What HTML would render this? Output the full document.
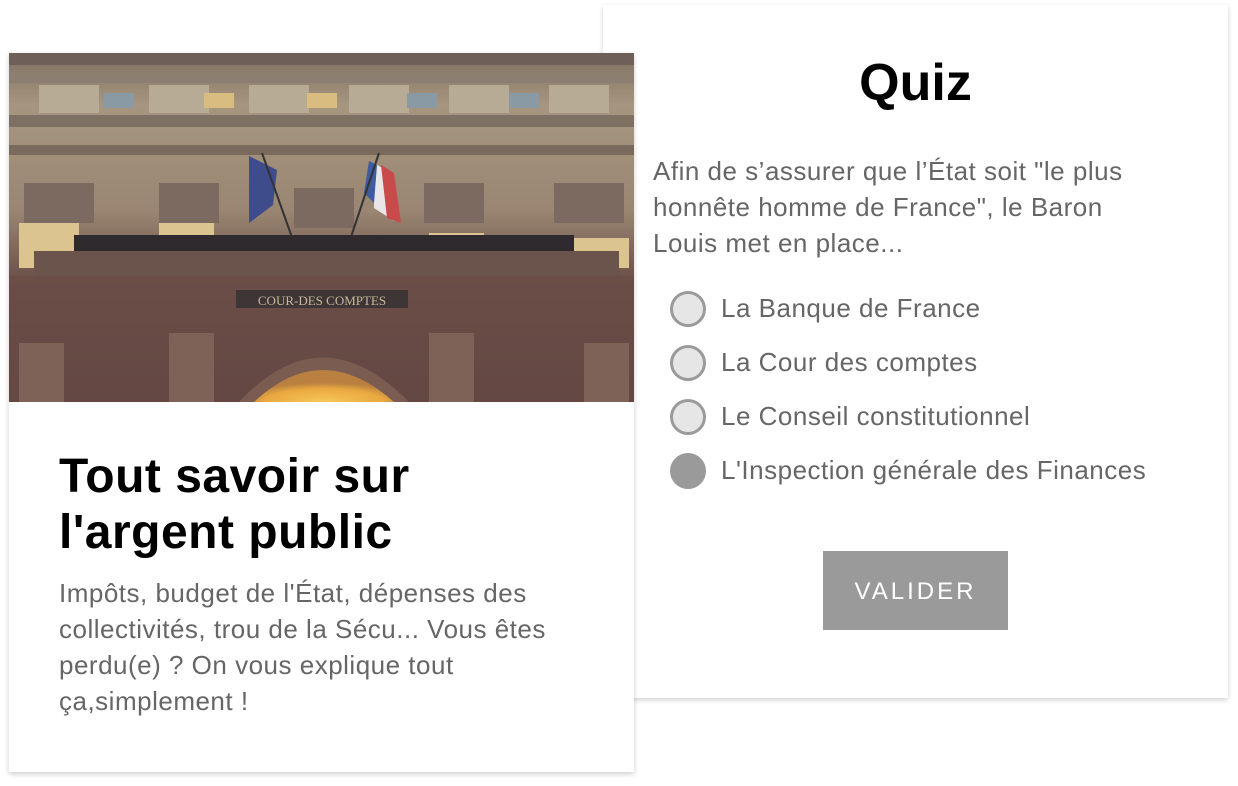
<!DOCTYPE html>
<html><head><meta charset="utf-8"><style>
html,body{margin:0;padding:0;background:#fff;width:1238px;height:786px;overflow:hidden;position:relative}
.quiz{position:absolute;left:603px;top:5px;width:625px;height:693px;background:#fff;box-shadow:0 2px 5px rgba(0,0,0,.18)}
.card{position:absolute;left:9px;top:53px;width:625px;height:719px;background:#fff;box-shadow:0 2px 5px rgba(0,0,0,.2)}
.sans{font-family:"Liberation Sans",sans-serif;color:#666;font-size:26px;letter-spacing:0.5px;line-height:36px;white-space:nowrap}
h1{position:absolute;margin:0;font-family:"Liberation Sans",sans-serif;font-weight:bold;color:#000}
.opt{position:absolute;left:67px;height:34px}
.opt .r{position:absolute;left:0;top:0;width:30px;height:30px;border-radius:50%;border:3px solid #9a9a9a;background:#e6e6e6}
.opt .r.f{background:#9a9a9a}
.opt span{position:absolute;left:51px;top:-1px}
.btn{position:absolute;left:220px;top:546px;width:185px;height:79px;background:#9a9a9a;color:#fff;font-family:"Liberation Sans",sans-serif;font-size:24px;letter-spacing:3px;text-align:center;line-height:81px}
</style></head><body>
<div class="quiz">
<h1 style="left:0;width:625px;text-align:center;top:48px;font-size:52px">Quiz</h1>
<div class="sans" style="position:absolute;left:50px;top:148px">Afin de s’assurer que l’État soit "le plus<br>honnête homme de France", le Baron<br>Louis met en place...</div>
<div class="opt" style="top:286px"><div class="r"></div><span class="sans">La Banque de France</span></div>
<div class="opt" style="top:340px"><div class="r"></div><span class="sans">La Cour des comptes</span></div>
<div class="opt" style="top:394px"><div class="r"></div><span class="sans">Le Conseil constitutionnel</span></div>
<div class="opt" style="top:448px"><div class="r f"></div><span class="sans">L'Inspection générale des Finances</span></div>
<div class="btn">VALIDER</div>
</div>
<div class="card">
<svg width="625" height="349" viewBox="0 0 625 349" style="position:absolute;left:0;top:0;display:block">
<defs>
<linearGradient id="g" x1="0" y1="0" x2="0" y2="1">
<stop offset="0" stop-color="#7e6e62"/><stop offset=".15" stop-color="#a6967f"/><stop offset=".45" stop-color="#9a8672"/><stop offset=".65" stop-color="#6b5048"/><stop offset="1" stop-color="#5a4040"/></linearGradient>
<radialGradient id="a" cx=".5" cy="1" r=".6"><stop offset="0" stop-color="#f7c75a"/><stop offset=".7" stop-color="#e9a840"/><stop offset="1" stop-color="#b98040"/></radialGradient>
</defs>
<rect width="625" height="349" fill="url(#g)"/>
<rect y="0" width="625" height="12" fill="#6e6058"/>
<rect y="22" width="625" height="8" fill="#8c7e70"/>
<g fill="#b8ab96"><rect x="30" y="32" width="60" height="28"/><rect x="140" y="32" width="60" height="28"/><rect x="240" y="32" width="60" height="28"/><rect x="340" y="32" width="60" height="28"/><rect x="440" y="32" width="60" height="28"/><rect x="540" y="32" width="60" height="28"/></g>
<g fill="#d8bc80"><rect x="195" y="40" width="30" height="15"/><rect x="298" y="40" width="30" height="15"/></g>
<g fill="#8a9aa4"><rect x="95" y="40" width="30" height="15"/><rect x="398" y="40" width="30" height="15"/><rect x="500" y="40" width="30" height="15"/></g>
<rect y="62" width="625" height="12" fill="#7e7062"/>
<rect y="92" width="625" height="10" fill="#7a6a5c"/>
<g fill="#7c6a60"><rect x="15" y="130" width="70" height="40"/><rect x="150" y="130" width="60" height="40"/><rect x="285" y="135" width="60" height="40"/><rect x="415" y="130" width="60" height="40"/><rect x="545" y="130" width="70" height="40"/></g>
<g fill="#dcc490"><rect x="10" y="170" width="60" height="45"/><rect x="150" y="170" width="55" height="30"/><rect x="420" y="180" width="55" height="20"/><rect x="560" y="185" width="60" height="30"/></g>
<polygon points="240,103 268,117 264,152 240,170" fill="#3e4c8c"/>
<line x1="253" y1="100" x2="285" y2="190" stroke="#333" stroke-width="2"/>
<polygon points="365,110 378,118 385,168 365,155" fill="#e8e6e8"/><polygon points="372,112 385,120 392,170 378,165" fill="#c84a4a"/><polygon points="360,108 368,112 365,150 355,140" fill="#3e5aa0"/>
<line x1="370" y1="100" x2="340" y2="190" stroke="#333" stroke-width="2"/>
<rect x="65" y="182" width="500" height="16" fill="#2e2a2e"/>
<rect x="25" y="198" width="585" height="25" fill="#6a544c"/>
<rect x="0" y="223" width="625" height="126" fill="#6a4c46" opacity=".6"/>
<rect x="227" y="237" width="172" height="18" fill="#3e3636"/>
<text x="313" y="252" text-anchor="middle" font-family="Liberation Serif,serif" font-size="13" fill="#cbb89a">COUR-DES COMPTES</text>
<g fill="#7e6258"><rect x="10" y="290" width="45" height="59"/><rect x="160" y="280" width="45" height="69"/><rect x="420" y="280" width="45" height="69"/><rect x="575" y="290" width="45" height="59"/></g>
<path d="M230 349 Q313 260 400 349Z" fill="#7a5c50"/>
<path d="M245 349 Q313 285 385 349Z" fill="url(#a)"/>
</svg>
<h1 style="left:50px;top:396px;font-size:48px;line-height:56px;letter-spacing:0.5px">Tout savoir sur<br>l'argent public</h1>
<div class="sans" style="position:absolute;left:50px;top:522px">Impôts, budget de l'État, dépenses des<br>collectivités, trou de la Sécu... Vous êtes<br>perdu(e) ? On vous explique tout<br>ça,simplement !</div>
</div>
</body></html>
